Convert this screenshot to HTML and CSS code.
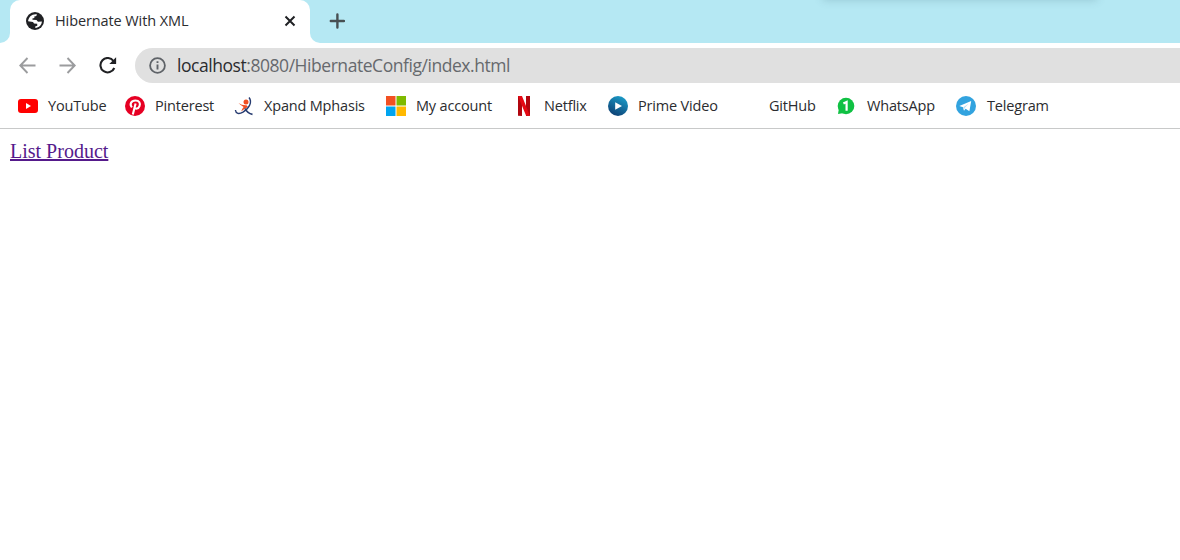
FILE: index.html
```html
<!DOCTYPE html>
<html lang="en">
<head>
<meta charset="utf-8">
<title>Hibernate With XML</title>
<link rel="stylesheet" href="styles.css">
</head>
<body>
<header class="browser">
  <div class="tab-strip">
    <div class="strip-start"></div>
    <div class="tab-back">
      <div class="tab">
        <svg class="globe" width="18" height="18" viewBox="0 0 18 18"><circle cx="9" cy="9" r="9" fill="#202124"/><path d="M10.8 2.2 C10.9 3.7 10.2 4.4 8.5 4.3 L8.3 6 L6.4 6.5 L6.5 7.8 L10.5 8 L12 9.8 L15.9 9.5 C15.7 13 13 15.7 9.4 15.9 L9.2 14.6 L11.3 13.7 L11.2 11.8 L8 11.4 L7 9.9 L2.1 9.3 C2.3 5 6 1.6 10.8 2.2Z" fill="#fff"/></svg>
        <span class="tab-title">Hibernate With XML</span>
        <svg class="close" width="12" height="12" viewBox="0 0 12 12"><path d="M1.5 1.5 L10.5 10.5 M10.5 1.5 L1.5 10.5" stroke="#202124" stroke-width="2"/></svg>
      </div>
    </div>
    <div class="strip-rest">
      <svg class="plus" width="16" height="16" viewBox="0 0 16 16"><path d="M8.4 1.4 V14.6 M1.8 8 H15" stroke="#474f52" stroke-width="2.4" stroke-linecap="round"/></svg>
      <div class="strip-shadow"></div>
    </div>
  </div>
  <div class="toolbar">
    <svg width="18" height="18" viewBox="0 0 18 18" fill="none" stroke="#9b9c9e" stroke-width="1.9"><path d="M16.5 8.5 H1.5 M8.5 1 L1.3 8.5 L8.5 16"/></svg>
    <svg width="18" height="18" viewBox="0 0 18 18" fill="none" stroke="#9b9c9e" stroke-width="1.9"><path d="M.5 8.5 H15.5 M8.5 1 L15.7 8.5 L8.5 16"/></svg>
    <svg width="18" height="18" viewBox="0 0 18 18"><path d="M14.5 4 A7.2 7.2 0 1 0 15.3 11" fill="none" stroke="#202124" stroke-width="2.1"/><path d="M17.1 0.3 V7.1 H10.3 Z" fill="#202124"/></svg>
    <div class="address">
      <svg width="17" height="17" viewBox="0 0 17 17"><circle cx="8.5" cy="8.5" r="7.4" fill="none" stroke="#5f6368" stroke-width="1.8"/><path d="M8.5 7.4 V12.6 M8.5 4.3 V6.1" stroke="#5f6368" stroke-width="1.9"/></svg>
      <span class="url"><span class="host">localhost</span><span class="path">:8080/HibernateConfig/index.html</span></span>
    </div>
  </div>
  <nav class="bookmarks">
    <a class="bm youtube"><svg width="20" height="20" viewBox="0 0 20 20"><rect y="3" width="20" height="14" rx="3" fill="#f00"/><path d="M8 7 L13 10 L8 13Z" fill="#fff"/></svg><span>YouTube</span></a>
    <a class="bm pinterest"><svg width="20" height="20" viewBox="0 0 20 20"><circle cx="10" cy="10" r="10" fill="#e60023"/><path d="M6.9 11.4 C4.2 8.2 6.2 4.5 10.4 4.5 C14.3 4.5 15.7 7.4 14.5 10.2 C13.4 13 10.5 13.2 9.5 11.4 M10.6 7.6 L7.8 18.5" fill="none" stroke="#fff" stroke-width="2.1"/></svg><span>Pinterest</span></a>
    <a class="bm xpand"><svg width="20" height="20" viewBox="0 0 20 20"><circle cx="12" cy="6" r="2.5" fill="#f04e23"/><path d="M4.5 7 Q8 9.6 12.5 9.3 L14 11 Q10 12.5 7.2 15.5 Q8 12.5 9.6 11 Q7 9.6 4.5 7Z" fill="#f04e23"/><path d="M15 1.5 C18.5 6 15.5 12 9 16.2 C5 18.4 1.8 17.8 1.4 14" fill="none" stroke="#263b70" stroke-width="1.4"/><path d="M11 12.5 C12.5 15.6 15 17.7 18.5 18.3" fill="none" stroke="#263b70" stroke-width="1.7"/></svg><span>Xpand Mphasis</span></a>
    <a class="bm account"><svg width="20" height="20" viewBox="0 0 20 20"><path d="M0 0H9.5V9.5H0Z" fill="#f25022"/><path d="M10.5 0H20V9.5H10.5Z" fill="#7fba00"/><path d="M0 10.5H9.5V20H0Z" fill="#00a4ef"/><path d="M10.5 10.5H20V20H10.5Z" fill="#ffb900"/></svg><span>My account</span></a>
    <a class="bm netflix"><svg width="20" height="20" viewBox="0 0 20 20"><path d="M4 0H8V20L4 19.7ZM12 0H16V19.7L12 20Z" fill="#b1060f"/><path d="M4 0H8L16 20L12 19.6Z" fill="#e50914"/></svg><span>Netflix</span></a>
    <a class="bm prime"><svg width="20" height="20" viewBox="0 0 20 20"><defs><linearGradient id="prime-blue" x1=".8" y1="0" x2=".3" y2="1"><stop stop-color="#1b9fcb"/><stop offset="1" stop-color="#0d3f73"/></linearGradient></defs><circle cx="10" cy="10" r="10" fill="url(#prime-blue)"/><path d="M7.2 6.2 L14 10 L7.2 13.8Z" fill="#fff"/></svg><span>Prime Video</span></a>
    <a class="bm github"><i></i><span>GitHub</span></a>
    <a class="bm whatsapp"><svg width="20" height="20" viewBox="0 0 20 20"><circle cx="10" cy="10" r="8.3" fill="#10c143"/><path d="M3 12 L2 18 L8 17Z" fill="#10c143"/><path d="M7.4 7.6 L10.6 6 V14.7" fill="none" stroke="#fff" stroke-width="2.2"/></svg><span>WhatsApp</span></a>
    <a class="bm telegram"><svg width="20" height="20" viewBox="0 0 20 20"><circle cx="10" cy="10" r="10" fill="#32a3df"/><path d="M3.3 10 L15.2 5 L13.4 15.3 L9.6 12.8 L8 14.8 L7 11.3Z" fill="#fff"/><path d="M7.3 11.3 L12.8 7.4 L8.6 12 L8 14.6Z" fill="#b9dff4"/></svg><span>Telegram</span></a>
  </nav>
</header>
<main class="page"><a class="list-link" href="#">List Product</a></main>
</body>
</html>
```
FILE: styles.css
```css
* { box-sizing: border-box; }
body { margin: 0; background: #fff; overflow: hidden; }
svg { display: block; flex: none; }
.browser { font-family: "Open Sans", "Noto Sans", sans-serif; color: #2b2c2f; white-space: nowrap; }
.tab-strip { display: flex; height: 43px; }
.strip-start { width: 10px; background: #b5e8f3; border-bottom-right-radius: 10px; }
.tab-back { width: 300px; height: 43px; background: linear-gradient(#b5e8f3 50%, #fff 50%); }
.tab { display: flex; align-items: center; height: 43px; padding: 0 14px 1px 16px; background: #fff; border-radius: 10px 10px 0 0; }
.tab-title { flex: 1; margin-left: 11px; padding-bottom: 2px; font-size: 14.5px; letter-spacing: -0.1px; }
.strip-rest { position: relative; flex: 1; padding: 13px 0 0 19px; background: #b5e8f3; border-bottom-left-radius: 10px; overflow: hidden; }
.strip-shadow { position: absolute; top: -10px; left: 513px; width: 274px; height: 10px; box-shadow: 0 0 9px rgba(60, 100, 115, 0.25); }
.toolbar { display: flex; align-items: center; gap: 22px; height: 45px; padding-left: 19px; }
.address { display: flex; align-items: center; flex: 1; height: 35px; margin-left: -4px; padding-left: 14px; background: #e0e0e0; border-radius: 18px 0 0 18px; }
.url { margin-left: 11px; padding-bottom: 1px; font-size: 17.5px; letter-spacing: -0.45px; }
.path { color: #66696d; }
.bookmarks { display: flex; align-items: center; height: 41px; padding: 0 0 5px 18px; border-bottom: 1px solid #c8c9c9; font-size: 14.5px; letter-spacing: -0.18px; }
.bm { display: flex; align-items: center; gap: 10px; flex: none; }
.bm i { width: 20px; }
.youtube { width: 107px; }
.pinterest { width: 109px; }
.xpand { width: 152px; }
.account { width: 128px; }
.netflix { width: 94px; }
.prime { width: 131px; }
.github { width: 97px; }
.whatsapp { width: 120px; gap: 11px; }
.telegram { width: 100px; gap: 11px; }
.page { padding: 11px 10px; font: 20px/22px "Liberation Serif", serif; }
.list-link { color: #551a8b; }
```
